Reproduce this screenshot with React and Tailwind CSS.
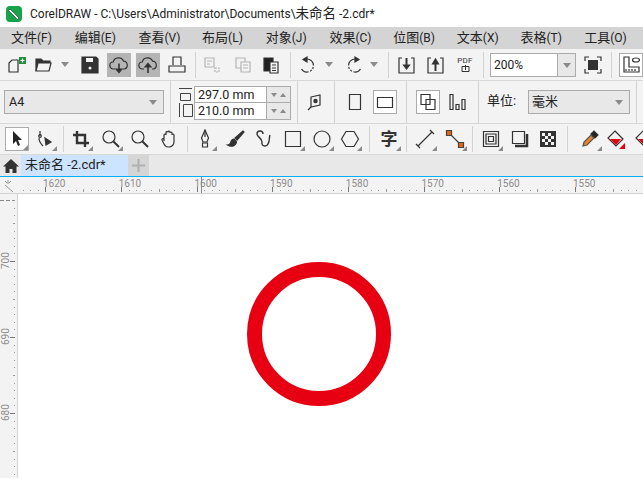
import React from 'react';

const FONT = { fontFamily: 'Roboto, "Noto Sans CJK SC", sans-serif' };

const Sep = ({ x, h = 'h-[26px]' }) => (
  <div className={`absolute top-1/2 -translate-y-1/2 w-px bg-[#d2d2d2] ${h}`} style={{ left: x }} />
);

// icon slot: centres its child at x inside a toolbar row
const Slot = ({ x, w = 24, boxed, active, children }) => (
  <div
    className={`absolute top-1/2 -translate-y-1/2 h-[24px] flex items-center justify-center ${boxed ? 'bg-white border border-[#ababab]' : ''} ${active ? 'bg-[#b4b4b4]' : ''}`}
    style={{ left: x - w / 2, width: w }}
  >
    {children}
  </div>
);

const Ico = ({ children, s = 20, stroke = '#333', sw = 1.2 }) => (
  <svg width={s} height={s} viewBox="0 0 20 20" fill="none" stroke={stroke} strokeWidth={sw}>
    {children}
  </svg>
);

const Drop = () => (
  <svg width="8" height="5" viewBox="0 0 8 5"><path d="M0 0h8L4 5z" fill="#8a8a8a" /></svg>
);

const Corner = () => (
  <svg className="absolute right-0 bottom-0" width="5" height="5" viewBox="0 0 5 5"><path d="M5 0v5H0z" fill="#8a8a8a" /></svg>
);

const Cloud = ({ up }) => (
  <Ico s={20}>
    <path d="M6 14H4.500a3.500 3.500 0 0 1-.3-7A5.500 5.500 0 0 1 14.600 6.200 4 4 0 0 1 15.500 14H14" />
    <path d={up ? 'M10 18V9.500' : 'M10 8.500V17'} strokeWidth="1.6" />
    <path d={up ? 'M7 12l3-3.500 3 3.500z' : 'M7 14l3 3.500 3-3.500z'} fill="#333" />
  </Ico>
);

const Menu = () => {
  const items = [['文件', '(F)'], ['编辑', '(E)'], ['查看', '(V)'], ['布局', '(L)'], ['对象', '(J)'], ['效果', '(C)'], ['位图', '(B)'], ['文本', '(X)'], ['表格', '(T)'], ['工具', '(O)']];
  return (
    <div className="h-[22px] bg-[#d4d4d4] flex items-center pl-[11px] text-[13px] text-[#222] whitespace-nowrap overflow-hidden shrink-0">
      {items.map(([m, key]) => (
        <span key={m} className="w-[63.7px] shrink-0">{m}<span className="text-[12px]">{key}</span></span>
      ))}
    </div>
  );
};

const ToolbarMain = () => (
  <div className="relative h-[31px] bg-[#f3f3f3] border-b border-[#d8d8d8] shrink-0 box-content">
    <Slot x={16}>
      <Ico><path d="M3 8l3-3h6v12H3z" /><path d="M13 2h7v7h-7z" fill="#1f8f3a" stroke="none" /><path d="M16.500 3.500v4M14.500 5.500h4" stroke="#fff" /></Ico>
    </Slot>
    <Slot x={44}>
      <Ico><path d="M2 16V4h5l2 2h7v2" fill="#333" /><path d="M2 16l2-8h13l-2 8z" fill="#f3f3f3" /></Ico>
    </Slot>
    <Slot x={65} w={10}><Drop /></Slot>
    <Slot x={90}>
      <Ico><path d="M2 2h14l2 2v14H2z" fill="#333" /><path d="M6 3h7v4H6z" fill="#f3f3f3" stroke="none" /><circle cx="10" cy="13" r="1.500" fill="#f3f3f3" stroke="none" /></Ico>
    </Slot>
    <Slot x={119} active><Cloud /></Slot>
    <Slot x={148} active><Cloud up /></Slot>
    <Slot x={177}>
      <Ico><path d="M6 10V2h8v8" /><path d="M2 11h16v6H2z" /></Ico>
    </Slot>
    <Sep x={195} />
    <Slot x={212}>
      <Ico stroke="#b5b5b5"><path d="M3 3h9v9H3z" /><path d="M5 6h5M5 9h3" /><path d="M13 13h4v4h-4z" strokeDasharray="2 1" /></Ico>
    </Slot>
    <Slot x={243}>
      <Ico stroke="#b5b5b5"><path d="M3 3h9v10H3z" /><path d="M8 7h9v10H8z" fill="#f3f3f3" /><path d="M10 10h5M10 13h5" /></Ico>
    </Slot>
    <Slot x={271}>
      <Ico><path d="M3 3h9v13H3z" fill="#222" /><path d="M9 7h8v11H9z" fill="#f3f3f3" /><path d="M11 10h4M11 13h4M11 15.500h4" /></Ico>
    </Slot>
    <Sep x={290} />
    <Slot x={308}>
      <Ico><path d="M9 4a6.500 6.500 0 1 1-5.500 10" strokeDasharray="10 1.500 2 1.500 2 1.500" /><path d="M5 4.500l4-2.500v5z" fill="#333" /></Ico>
    </Slot>
    <Slot x={329} w={10}><Drop /></Slot>
    <Slot x={354}>
      <Ico><path d="M11 4a6.500 6.500 0 1 0 5.500 10" strokeDasharray="10 1.500 2 1.500 2 1.500" /><path d="M15 4.500l-4-2.500v5z" fill="#333" /></Ico>
    </Slot>
    <Slot x={374} w={10}><Drop /></Slot>
    <Sep x={388} />
    <Slot x={407}>
      <Ico><path d="M5 3H2v15h15V3h-3" /><path d="M9.500 3v9" strokeWidth="2" /><path d="M6.500 10h6l-3 4z" fill="#333" /></Ico>
    </Slot>
    <Slot x={436}>
      <Ico><path d="M5 3H2v15h15V3h-3" /><path d="M9.500 8v8" strokeWidth="2" /><path d="M6.500 9h6l-3-5z" fill="#333" /></Ico>
    </Slot>
    <Slot x={465}>
      <div className="flex flex-col items-center leading-none">
        <span className="text-[8px] text-[#333] tracking-[0.3px]">PDF</span>
        <svg width="9" height="7" viewBox="0 0 9 7" fill="none" stroke="#333"><path d="M1 1.500h7v5H1zM4.500 0v5" /></svg>
      </div>
    </Slot>
    <Sep x={483} />
    <div className="absolute left-[490px] top-[4px] w-[86px] h-[24px] flex border border-[#ababab] bg-white">
      <span className="flex-1 pl-[3px] text-[12px] leading-[22px] text-[#222]">200%</span>
      <div className="w-[18px] bg-[#e8e8e8] border-l border-[#ababab] flex items-center justify-center"><Drop /></div>
    </div>
    <Slot x={593}>
      <Ico><path d="M2 6V2h4M14 2h4v4M18 14v4h-4M6 18H2v-4" /><path d="M5 5h10v10H5z" fill="#333" stroke="none" /></Ico>
    </Slot>
    <Sep x={611} />
    <Slot x={631} boxed>
      <Ico><path d="M3 2v15h15v-5H8V2z" /><path d="M5 14v2M8 14v2M11 14v2M14 14v2" /><ellipse cx="15" cy="5" rx="3.500" ry="2" /></Ico>
    </Slot>
  </div>
);

const SizeField = ({ value }) => (
  <div className="flex h-[16px] border-b border-[#ababab] last:border-b-0">
    <span className="w-[72px] bg-white pl-[3px] text-[12.5px] leading-[15px] text-[#222] border-r border-[#ababab]">{value}</span>
    <div className="flex-1 bg-[#e8e8e8] flex items-center justify-around px-[2px]">
      <svg width="6" height="4" viewBox="0 0 6 4"><path d="M0 0h6L3 4z" fill="#8a8a8a" /></svg>
      <svg width="6" height="4" viewBox="0 0 6 4"><path d="M0 4h6L3 0z" fill="#8a8a8a" /></svg>
    </div>
  </div>
);

const PropertyBar = () => (
  <div className="relative h-[42px] bg-[#f3f3f3] border-b border-[#d8d8d8] shrink-0 box-content">
    <div className="absolute left-[4px] top-[9px] w-[160px] h-[24px] bg-[#e8e8e8] border border-[#ababab] flex items-center justify-between pl-[4px] pr-[6px]">
      <span className="text-[12.5px] text-[#222]">A4</span>
      <Drop />
    </div>
    <Sep x={170} h="h-[42px]" />
    <div className="absolute left-[178px] top-[6px] flex flex-col gap-[2px]">
      <svg width="15" height="14" viewBox="0 0 15 14" fill="none" stroke="#444"><path d="M1 1.500h13M2.500 6.500h10v7h-10z" /></svg>
      <svg width="15" height="14" viewBox="0 0 15 14" fill="none" stroke="#444"><path d="M1.500 0v14M5.500 1.500h9v12h-9z" /></svg>
    </div>
    <div className="absolute left-[194px] top-[5px] w-[97px] border border-[#ababab]">
      <SizeField value="297.0 mm" />
      <SizeField value="210.0 mm" />
    </div>
    <Sep x={297} h="h-[42px]" />
    <Slot x={316}>
      <Ico><path d="M5 5l9-2v10l-9 2z" /><circle cx="9.500" cy="9" r="1.600" fill="#333" /><path d="M5 15l-3 3" /></Ico>
    </Slot>
    <Sep x={334} h="h-[42px]" />
    <Slot x={355}>
      <Ico><path d="M4.500 2.500h11v15h-11z" /></Ico>
    </Slot>
    <Slot x={385} boxed>
      <Ico><path d="M2.500 5.500h15v10h-15z" /></Ico>
    </Slot>
    <Sep x={406} h="h-[42px]" />
    <Slot x={428} boxed>
      <Ico><path d="M3 2.500h9v10H3z" /><path d="M8 7.500h9v10H8z" /></Ico>
    </Slot>
    <Slot x={457}>
      <Ico><path d="M3 2.500h3v15H3zM9 12.500h3v5H9zM15 7.500h3v10h-3z" /></Ico>
    </Slot>
    <Sep x={478} h="h-[42px]" />
    <span className="absolute left-[487px] top-[11px] text-[13px] leading-[18px] text-[#222]">单位:</span>
    <div className="absolute left-[528px] top-[9px] w-[102px] h-[24px] bg-[#e8e8e8] border border-[#ababab] flex items-center justify-between pl-[3px] pr-[6px]">
      <span className="text-[13px] text-[#222]">毫米</span>
      <Drop />
    </div>
    <Sep x={636} h="h-[42px]" />
  </div>
);

const Toolbox = () => (
  <div className="relative h-[30px] bg-[#f3f3f3] border-b border-[#d8d8d8] shrink-0 box-content">
    <Slot x={17} boxed>
      <svg width="14" height="18" viewBox="0 0 14 18"><path d="M3 1v13l3-3 2 5 2-1-2-5h4z" fill="#222" /></svg>
      <Corner />
    </Slot>
    <Slot x={45}>
      <Ico><path d="M5 2v5M4 9c0 4 2 6 4 8" /><circle cx="5" cy="7" r="1.300" /><path d="M10 9l6 4-5 3z" fill="#333" /></Ico>
      <Corner />
    </Slot>
    <Sep x={63} />
    <Slot x={81}>
      <Ico sw={2.4}><path d="M6 2v12h12M2 6h12v12" /></Ico>
      <Corner />
    </Slot>
    <Slot x={111}>
      <Ico><circle cx="8" cy="8" r="6" /><path d="M12.500 12.500L18 18" strokeWidth="2" /></Ico>
      <Corner />
    </Slot>
    <Slot x={140}>
      <Ico><circle cx="8" cy="8" r="6" /><path d="M12.500 12.500L18 18" strokeWidth="2" /></Ico>
    </Slot>
    <Slot x={169}>
      <Ico><path d="M5 12V6a1 1 0 0 1 2 0V3.500a1 1 0 0 1 2 0V3a1 1 0 0 1 2 0v1a1 1 0 0 1 2 0v2a1 1 0 0 1 2 0v7a5 5 0 0 1-5 5H9c-2 0-3-1-4-3l-2-4c-.5-1 1-2 2-1z" /></Ico>
    </Slot>
    <Sep x={187} />
    <Slot x={205}>
      <Ico><path d="M10 1l3.500 8-1.500 4H8L6.500 9z" /><path d="M10 1v7" /><path d="M7.500 14h5v4h-5z" /></Ico>
      <Corner />
    </Slot>
    <Slot x={235}>
      <Ico><path d="M18 2l-8 7 2 2 7-8z" fill="#333" /><path d="M9 10c-3 0-3 3-3.500 4-.5 1-2 2-3 2 3 2 8 2 9-3z" fill="#333" /></Ico>
    </Slot>
    <Slot x={264}>
      <Ico sw={1.4}><path d="M9 5a3 3 0 1 0-6 0c0 3 5 4 5 8a3 3 0 0 0 3 4 3.500 3.500 0 0 0 3-2c2-3 1-7 2-9" /></Ico>
    </Slot>
    <Slot x={293}>
      <Ico><path d="M2.500 2.500h15v15h-15z" /></Ico>
      <Corner />
    </Slot>
    <Slot x={322}>
      <Ico><circle cx="10" cy="10" r="8" /></Ico>
      <Corner />
    </Slot>
    <Slot x={350}>
      <Ico><path d="M6 2.500h8l4.500 7.500-4.500 7.500H6L1.500 10z" /></Ico>
      <Corner />
    </Slot>
    <Sep x={369} />
    <Slot x={389}>
      <span className="text-[17px] font-bold text-[#333] leading-none">字</span>
      <Corner />
    </Slot>
    <Sep x={406} />
    <Slot x={425}>
      <Ico><path d="M3 17L17 3M1 15l4 4M15 1l4 4" /></Ico>
      <Corner />
    </Slot>
    <Slot x={455}>
      <Ico stroke="#444"><path d="M5 5l10 10" /><path d="M1.500 1.500h5v5h-5zM13.500 13.500h5v5h-5z" fill="#e8650e" /></Ico>
      <Corner />
    </Slot>
    <Sep x={472} />
    <Slot x={491}>
      <Ico><path d="M2.500 2.500h15v15h-15zM5 5h10v10H5zM7.500 7.500h5v5h-5z" /></Ico>
      <Corner />
    </Slot>
    <Slot x={520}>
      <Ico><path d="M2.500 2.500h12v12h-12z" /><path d="M17 5v12H5" strokeWidth="2.500" /></Ico>
    </Slot>
    <Slot x={548}>
      <svg width="16" height="16" viewBox="0 0 16 16">
        <rect width="16" height="16" fill="#333" />
        <path d="M2 2h3v3H2zM8 2h3v3H8zM5 5h3v3H5zM11 5h3v3h-3zM2 8h3v3H2zM8 8h3v3H8zM5 11h3v3H5zM11 11h3v3h-3z" fill="#f3f3f3" />
      </svg>
    </Slot>
    <Sep x={567} />
    <Slot x={590}>
      <Ico><path d="M3 17l1-4 7-7 3 3-7 7z" fill="#e8832a" stroke="#555" /><path d="M11 5l3-3 4 4-3 3z" fill="#222" /></Ico>
      <Corner />
    </Slot>
    <Slot x={616}>
      <Ico><path d="M9 2l8 8-7 7-8-8z" /><path d="M4 10h11l-5 6z" fill="#e60012" stroke="none" /><path d="M19 14v6h-6z" fill="#e60012" stroke="none" /></Ico>
    </Slot>
    <Slot x={644}>
      <Ico><path d="M9 2l8 8-7 7-8-8z" /><path d="M4 10h11l-5 6z" fill="#e60012" stroke="none" /></Ico>
    </Slot>
  </div>
);

const Tabs = () => (
  <div className="h-[21px] bg-[#e8e8e8] flex shrink-0">
    <div className="w-[21px] flex items-center justify-center">
      <svg width="16" height="16" viewBox="0 0 16 16"><path d="M8 1L0 8.500h2.500V15h4v-4h3v4h4V8.500H16z" fill="#333" /></svg>
    </div>
    <div className="w-[107px] bg-[#cce4ff] pl-[4px] text-[13px] leading-[20px] text-[#222] whitespace-nowrap">未命名 -2.cdr*</div>
    <div className="w-[21px] bg-[#d5d5d5] flex items-center justify-center">
      <svg width="13" height="13" viewBox="0 0 13 13"><path d="M5.500 0h2v5.500H13v2H7.500V13h-2V7.500H0v-2h5.500z" fill="#b0b0b0" /></svg>
    </div>
  </div>
);

const TopRuler = () => {
  const labels = [1620, 1610, 1600, 1590, 1580, 1570, 1560, 1550];
  const dots = [];
  for (let i = -1; i < 85; i++) dots.push(15 + i * 7.57);
  return (
    <svg width="643" height="17" className="block shrink-0">
      <rect width="643" height="17" fill="#f3f3f3" />
      <path d="M5 4l2 2M8 3v4M11 4L9 6M5 8l8 7" stroke="#999" fill="none" />
      {dots.map((x, i) => {
        if (x < 20) return null;
        const major = (i - 5) % 10 === 0;
        const mid = (i - 5) % 5 === 0;
        const px = Math.round(x) + 0.5;
        if (major) return <path key={i} d={`M${px} 10v5`} stroke="#777" />;
        return <path key={i} d={mid ? `M${px} 12v3` : `M${px} 13v1`} stroke="#999" />;
      })}
      {labels.map((n, i) => (
        <text key={n} x={43 + i * 75.7} y={10} fontSize="10" fill="#8c8c8c" style={FONT}>{n}</text>
      ))}
      <path d="M201.500 0v17" stroke="#888" />
      <rect y="16" width="643" height="1" fill="#d2d2d2" />
    </svg>
  );
};

const LeftRuler = () => {
  const marks = [];
  for (let i = -8; i < 40; i++) marks.push({ y: 261 - 194 + i * 7.6, i });
  const labels = [['700', 261], ['690', 337], ['680', 413]];
  return (
    <svg width="18" height="284" className="block shrink-0">
      <rect width="18" height="284" fill="#f3f3f3" />
      <path d="M0 6.500h15" stroke="#888" strokeDasharray="4 2" />
      {marks.map(({ y, i }) => {
        const major = ((i % 10) + 10) % 10 === 0;
        const mid = ((i % 5) + 5) % 5 === 0;
        const py = Math.round(y) + 0.5;
        if (major) return <path key={i} d={`M10 ${py}h5`} stroke="#777" />;
        return <path key={i} d={mid ? `M13 ${py}h2` : `M14 ${py}h1`} stroke="#999" />;
      })}
      {labels.map(([t, y]) => (
        <text key={t} transform={`translate(8.500 ${y - 194 + 8}) rotate(-90)`} fontSize="10" fill="#8c8c8c" style={FONT}>{t}</text>
      ))}
      <rect x="17" width="1" height="284" fill="#d2d2d2" />
    </svg>
  );
};

export default function App() {
  return (
    <div className="w-[643px] h-[478px] bg-white flex flex-col overflow-hidden" style={FONT}>
      <div className="h-[27px] bg-white flex items-center shrink-0 pl-[6px] gap-[8px]">
        <svg width="16" height="16" viewBox="0 0 16 16">
          <rect width="16" height="16" rx="4" fill="#17a34a" />
          <path d="M4 3l9 9-1.500 1.500-9-9z" fill="#fff" stroke="#111" strokeWidth="0.5" />
        </svg>
        <span className="text-[12px] text-[#222] whitespace-nowrap">CorelDRAW - C:\Users\Administrator\Documents\<span className="text-[13.5px]">未命名</span> -2.cdr*</span>
      </div>
      <Menu />
      <ToolbarMain />
      <PropertyBar />
      <Toolbox />
      <Tabs />
      <div className="h-[1px] bg-[#00aeff] shrink-0" />
      <TopRuler />
      <div className="flex flex-1 min-h-0">
        <LeftRuler />
        <div className="flex-1 bg-white pl-[229px] pt-[68px]">
          <div className="w-[144px] h-[144px] rounded-full border-[15px] border-[#e60012]" />
        </div>
      </div>
    </div>
  );
}
